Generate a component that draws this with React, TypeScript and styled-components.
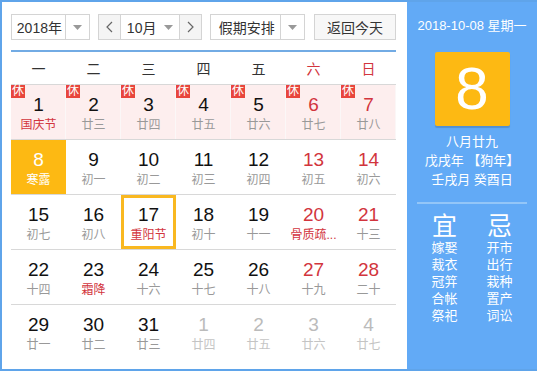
import React from "react"
import styled, { createGlobalStyle, css } from "styled-components"

type Day = {
  n: number
  lunar: string
  rest?: boolean
  fest?: boolean
  weekend?: boolean
  muted?: boolean
  today?: boolean
  selected?: boolean
}

const days: Day[] = [
  { n: 1, lunar: "国庆节", rest: true, fest: true },
  { n: 2, lunar: "廿三", rest: true },
  { n: 3, lunar: "廿四", rest: true },
  { n: 4, lunar: "廿五", rest: true },
  { n: 5, lunar: "廿六", rest: true },
  { n: 6, lunar: "廿七", rest: true, weekend: true },
  { n: 7, lunar: "廿八", rest: true, weekend: true },
  { n: 8, lunar: "寒露", today: true },
  { n: 9, lunar: "初一" },
  { n: 10, lunar: "初二" },
  { n: 11, lunar: "初三" },
  { n: 12, lunar: "初四" },
  { n: 13, lunar: "初五", weekend: true },
  { n: 14, lunar: "初六", weekend: true },
  { n: 15, lunar: "初七" },
  { n: 16, lunar: "初八" },
  { n: 17, lunar: "重阳节", fest: true, selected: true },
  { n: 18, lunar: "初十" },
  { n: 19, lunar: "十一" },
  // the cell shows the festival name cut short
  { n: 20, lunar: "骨质疏...", fest: true, weekend: true },
  { n: 21, lunar: "十三", weekend: true },
  { n: 22, lunar: "十四" },
  { n: 23, lunar: "霜降", fest: true },
  { n: 24, lunar: "十六" },
  { n: 25, lunar: "十七" },
  { n: 26, lunar: "十八" },
  { n: 27, lunar: "十九", weekend: true },
  { n: 28, lunar: "二十", weekend: true },
  { n: 29, lunar: "廿一" },
  { n: 30, lunar: "廿二" },
  { n: 31, lunar: "廿三" },
  { n: 1, lunar: "廿四", muted: true },
  { n: 2, lunar: "廿五", muted: true },
  { n: 3, lunar: "廿六", muted: true },
  { n: 4, lunar: "廿七", muted: true },
]

const weekdays = ["一", "二", "三", "四", "五", "六", "日"]
const yi = ["嫁娶", "裁衣", "冠笄", "合帐", "祭祀"]
const ji = ["开市", "出行", "栽种", "置产", "词讼"]

const Caret = () => (
  <svg width="9" height="5" viewBox="0 0 9 5">
    <path d="M0 0 L9 0 L4.5 5 Z" fill="#999" />
  </svg>
)

const Chevron = ({ dir }: { dir: "left" | "right" }) => (
  <svg width="7" height="12" viewBox="0 0 7 12">
    <polyline
      points={dir === "left" ? "6,1 1,6 6,11" : "1,1 6,6 1,11"}
      fill="none"
      stroke="#666"
      strokeWidth="1.2"
    />
  </svg>
)

const App = () => {
  return (
    <>
      <GlobalStyle />
      <Frame>
        <Main>
          <Toolbar>
            <Select $w={79}>
              <SelectText>2018年</SelectText>
              <SelectArrow>
                <Caret />
              </SelectArrow>
            </Select>
            <MonthGroup>
              <StepButton>
                <Chevron dir="left" />
              </StepButton>
              <MonthText>
                10月
                <Caret />
              </MonthText>
              <StepButton $right>
                <Chevron dir="right" />
              </StepButton>
            </MonthGroup>
            <Select $w={95}>
              <SelectText>假期安排</SelectText>
              <SelectArrow>
                <Caret />
              </SelectArrow>
            </Select>
            <TodayButton>返回今天</TodayButton>
          </Toolbar>
          <Weekdays>
            {weekdays.map((w, i) => (
              <Weekday key={w} $red={i > 4}>
                {w}
              </Weekday>
            ))}
          </Weekdays>
          <Grid>
            {days.map((d, i) => (
              <Cell key={i} $rest={d.rest} $today={d.today} $selected={d.selected}>
                {d.rest && <RestBadge>休</RestBadge>}
                <DayNum $weekend={d.weekend} $muted={d.muted} $today={d.today}>
                  {d.n}
                </DayNum>
                <Lunar $fest={d.fest} $muted={d.muted} $today={d.today}>
                  {d.lunar}
                </Lunar>
              </Cell>
            ))}
          </Grid>
        </Main>
        <Side>
          <DateLine>2018-10-08 星期一</DateLine>
          <BigDay>8</BigDay>
          <LunarInfo>
            <div>八月廿九</div>
            <div>戊戌年 【狗年】</div>
            <div>壬戌月 癸酉日</div>
          </LunarInfo>
          <Divider />
          <Almanac>
            <AlmanacCol>
              <AlmanacHead>宜</AlmanacHead>
              {yi.map((t) => (
                <div key={t}>{t}</div>
              ))}
            </AlmanacCol>
            <AlmanacCol>
              <AlmanacHead>忌</AlmanacHead>
              {ji.map((t) => (
                <div key={t}>{t}</div>
              ))}
            </AlmanacCol>
          </Almanac>
        </Side>
      </Frame>
    </>
  )
}

const GlobalStyle = createGlobalStyle`
  * { box-sizing: border-box; }
  body {
    margin: 0;
    font-family: "Liberation Sans", "Noto Sans CJK SC", sans-serif;
    color: #333;
  }
`

const Frame = styled.div`
  width: 537px;
  height: 371px;
  display: flex;
  border: 2px solid #5fa4ea;
  border-right: none;
  background: #fff;
`

const Main = styled.div`
  width: 405px;
  padding: 12px 11px 0 9px;
  display: flex;
  flex-direction: column;
`

const Toolbar = styled.div`
  display: flex;
  height: 26px;
  gap: 8px;
  padding-bottom: 10px;
  box-sizing: content-box;
  border-bottom: 2px solid #72abe4;
`

const Select = styled.div<{ $w: number }>`
  width: ${(p) => p.$w}px;
  height: 26px;
  display: flex;
  border: 1px solid #d4d4d4;
  font-size: 14px;
  color: #333;
`

const SelectText = styled.div`
  flex: 1;
  display: flex;
  align-items: center;
  justify-content: center;
  padding-left: 2px;
`

const SelectArrow = styled.div`
  width: 24px;
  display: flex;
  align-items: center;
  justify-content: center;
  border-left: 1px solid #d4d4d4;
`

const MonthGroup = styled.div`
  width: 105px;
  height: 26px;
  display: flex;
  border: 1px solid #d4d4d4;
  font-size: 14px;
`

const StepButton = styled.div<{ $right?: boolean }>`
  width: 22px;
  display: flex;
  align-items: center;
  justify-content: center;
  background: #f4f4f4;
  ${(p) =>
    p.$right
      ? css`
          border-left: 1px solid #d4d4d4;
        `
      : css`
          border-right: 1px solid #d4d4d4;
        `}
`

const MonthText = styled.div`
  flex: 1;
  display: flex;
  align-items: center;
  justify-content: center;
  gap: 8px;
`

const TodayButton = styled.div`
  width: 82px;
  height: 26px;
  margin-left: 1px;
  display: flex;
  align-items: center;
  justify-content: center;
  border: 1px solid #d4d4d4;
  background: #f7f7f7;
  font-size: 14px;
  color: #333;
`

const Weekdays = styled.div`
  display: grid;
  grid-template-columns: repeat(7, 55px);
  height: 32px;
`

const Weekday = styled.div<{ $red?: boolean }>`
  display: flex;
  align-items: center;
  justify-content: center;
  font-size: 14px;
  color: ${(p) => (p.$red ? "#d2353d" : "#333")};
`

const Grid = styled.div`
  display: grid;
  grid-template-columns: repeat(7, 55px);
  grid-auto-rows: 55px;
`

const Cell = styled.div<{ $rest?: boolean; $today?: boolean; $selected?: boolean }>`
  position: relative;
  border-top: 1px solid #d8d8d8;
  display: flex;
  flex-direction: column;
  align-items: center;
  padding-top: 9px;
  ${(p) =>
    p.$rest &&
    css`
      background: #fdeeee;
      box-shadow: inset -1px 0 0 #fbf7f7;
    `}
  ${(p) =>
    p.$today &&
    css`
      background: #fdb913;
    `}
  ${(p) =>
    p.$selected &&
    css`
      box-shadow: inset 0 0 0 3px #f9b820;
    `}
`

const RestBadge = styled.span`
  position: absolute;
  top: 0;
  left: 0;
  width: 14px;
  height: 13px;
  background: #e8463c;
  color: #fff;
  font-size: 12px;
  line-height: 13px;
  text-align: center;
`

const DayNum = styled.div<{ $weekend?: boolean; $muted?: boolean; $today?: boolean }>`
  font-size: 19px;
  line-height: 22px;
  color: ${(p) => (p.$today ? "#fff" : p.$muted ? "#bbb" : p.$weekend ? "#d2353d" : "#111")};
`

const Lunar = styled.div<{ $fest?: boolean; $muted?: boolean; $today?: boolean }>`
  font-size: 12px;
  line-height: 18px;
  white-space: nowrap;
  color: ${(p) => (p.$today ? "#fff" : p.$muted ? "#c4c4c4" : p.$fest ? "#d2353d" : "#999")};
`

const Side = styled.div`
  flex: 1;
  background: #62aaf6;
  display: flex;
  flex-direction: column;
  align-items: center;
  padding-top: 16px;
  color: #fff;
`

const DateLine = styled.div`
  font-size: 13px;
  line-height: 16px;
`

const BigDay = styled.div`
  margin-top: 18px;
  width: 75px;
  height: 74px;
  border-radius: 2px;
  background: #fdb913;
  box-shadow: 0 2px 1px rgba(0, 0, 0, 0.15);
  display: flex;
  align-items: center;
  justify-content: center;
  font-size: 60px;
  line-height: 1;
`

const LunarInfo = styled.div`
  margin-top: 6px;
  font-size: 13px;
  line-height: 19px;
  text-align: center;
`

const Divider = styled.div`
  margin-top: 13px;
  width: 110px;
  height: 2px;
  background: #93c6f8;
`

const Almanac = styled.div`
  margin-top: 9px;
  display: flex;
`

const AlmanacCol = styled.div`
  width: 55px;
  display: flex;
  flex-direction: column;
  align-items: center;
  font-size: 13px;
  line-height: 17px;
`

const AlmanacHead = styled.div`
  font-size: 25px;
  line-height: 26px;
`

export default App
